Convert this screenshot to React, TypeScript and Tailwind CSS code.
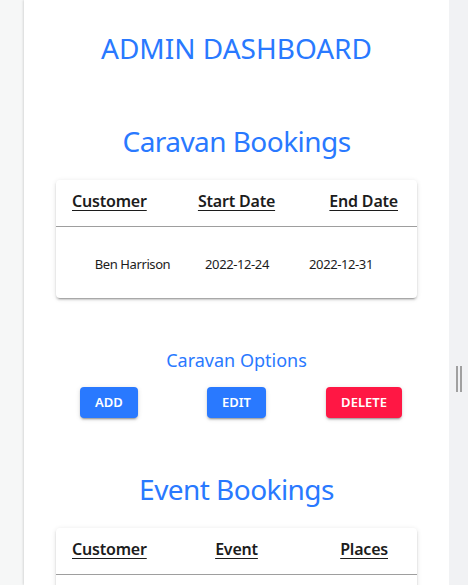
import React from "react";

const cardShadow =
  "shadow-[0_3px_1px_-2px_rgba(0,0,0,0.2),0_2px_2px_0_rgba(0,0,0,0.14),0_1px_5px_0_rgba(0,0,0,0.12)]";

function Header({ cols, rightPad }: { cols: string[]; rightPad: string }) {
  return (
    <div className="grid h-[47px] grid-cols-[1fr_auto_1fr] border-b border-[#9e9e9e] px-[16px] pt-[9px] text-[16px] font-semibold leading-[24px] tracking-[-0.2px] text-[#1c1c1c]">
      <div className="text-left">
        <span className="underline underline-offset-[3px]">{cols[0]}</span>
      </div>
      <div className="text-center">
        <span className="underline underline-offset-[3px]">{cols[1]}</span>
      </div>
      <div className={"text-right " + rightPad}>
        <span className="underline underline-offset-[3px]">{cols[2]}</span>
      </div>
    </div>
  );
}

export default function App() {
  return (
    <div className="flex h-[585px] w-[468px] overflow-hidden bg-[#f6f7f7] font-['Noto_Sans',sans-serif]">
      <div className="w-[24px] shrink-0 bg-[#f6f7f7]" />
      <div className="flex w-[425px] shrink-0 flex-col items-center bg-white shadow-[-1px_0_2px_rgba(0,0,0,0.12)]">
        <h1 className="mt-[28px] text-[28px] leading-[40px] text-[#2979ff]">ADMIN DASHBOARD</h1>
        <h2 className="mt-[53px] text-[28px] leading-[40px] tracking-[-0.55px] text-[#2979ff]">Caravan Bookings</h2>
        <div className={"mt-[19px] w-[361px] rounded-[4px] bg-white " + cardShadow}>
          <Header cols={["Customer", "Start Date", "End Date"]} rightPad="pr-[3px]" />
          <div className="grid h-[71px] grid-cols-[153px_56px_152px] pt-[27px] text-[13px] leading-[20px] tracking-[-0.4px] text-[#1c1c1c]">
            <div className="flex justify-center whitespace-nowrap">Ben Harrison</div>
            <div className="flex justify-center whitespace-nowrap">2022-12-24</div>
            <div className="flex justify-center whitespace-nowrap">2022-12-31</div>
          </div>
        </div>
        <h3 className="mt-[50px] text-[18px] leading-[24px] text-[#2979ff]">Caravan Options</h3>
        <div className="mt-[15px] flex w-full pl-[56px]">
          <button className={"h-[31px] w-[58px] rounded-[4px] bg-[#2979ff] text-[13px] font-semibold text-white " + cardShadow}>
            ADD
          </button>
          <button className={"ml-[69px] h-[31px] w-[59px] rounded-[4px] bg-[#2979ff] text-[13px] font-semibold text-white " + cardShadow}>
            EDIT
          </button>
          <button className={"ml-[60px] h-[31px] w-[76px] rounded-[4px] bg-[#ff1744] text-[13px] font-semibold text-white " + cardShadow}>
            DELETE
          </button>
        </div>
        <h2 className="mt-[51px] text-[28px] leading-[40px] tracking-[-0.55px] text-[#2979ff]">Event Bookings</h2>
        <div className={"mt-[19px] w-[361px] shrink-0 rounded-[4px] bg-white " + cardShadow}>
          <Header cols={["Customer", "Event", "Places"]} rightPad="pr-[13px]" />
          <div className="h-[71px]" />
        </div>
      </div>
      <div className="flex w-[19px] shrink-0 justify-center gap-[2px] bg-[#f1f2f4] pt-[366px]">
        <div className="h-[26px] w-[2px] bg-[#a0a0a0]" />
        <div className="h-[26px] w-[2px] bg-[#a0a0a0]" />
      </div>
    </div>
  );
}
